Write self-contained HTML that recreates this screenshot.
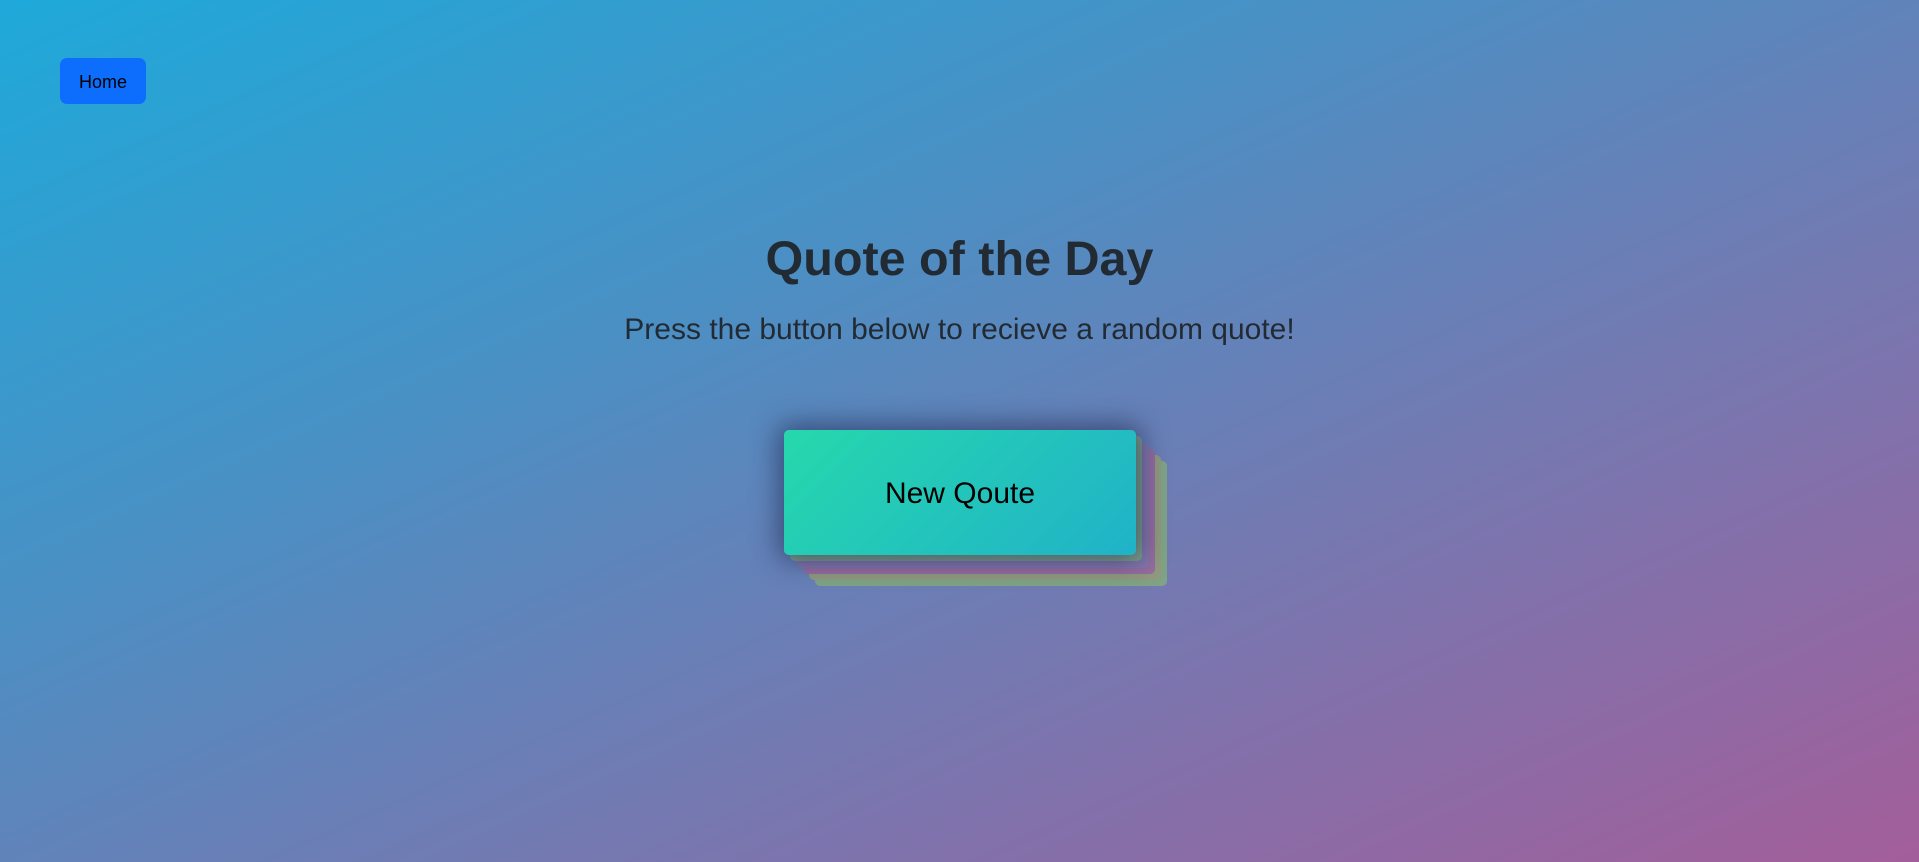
<!DOCTYPE html>
<html><head><style>
html,body{margin:0;padding:0;}
body{width:1919px;height:862px;overflow:hidden;position:relative;font-family:"Liberation Sans",sans-serif;
background:linear-gradient(to bottom right,#1ea9da 0%,#4a90c4 35%,#6f7cb4 60%,#a35e9a 100%);}
.home{position:absolute;left:60px;top:58px;width:86px;height:46px;background:#0d6efd;border-radius:7px;color:#000;font-size:18px;line-height:49px;text-align:center;}
h1{position:absolute;top:231px;left:0;width:100%;text-align:center;margin:0;font-size:48.5px;font-weight:bold;color:#222b33;}
p{position:absolute;top:313px;left:0;width:100%;text-align:center;margin:0;font-size:30px;color:#222b33;}
.l{position:absolute;width:352px;height:125px;border-radius:5px;}
.card{left:784px;top:430px;background:linear-gradient(135deg,#26d8ac,#20b2c9);box-shadow:0 0 26px 6px rgba(30,40,80,0.6);display:flex;align-items:center;justify-content:center;font-size:30px;color:#000;padding-top:2px;box-sizing:border-box;}
</style></head><body>
<div class="home">Home</div>
<h1>Quote of the Day</h1>
<p>Press the button below to recieve a random quote!</p>
<div class="l" style="left:815px;top:461px;background:#7fa384"></div>
<div class="l" style="left:809px;top:455px;background:#8f9a7e"></div>
<div class="l" style="left:803px;top:449px;background:#946d9e"></div>
<div class="l" style="left:797px;top:443px;background:#8476ac"></div>
<div class="l" style="left:790px;top:436px;background:#7fa38a"></div>
<div class="l card">New Qoute</div>
</body></html>
